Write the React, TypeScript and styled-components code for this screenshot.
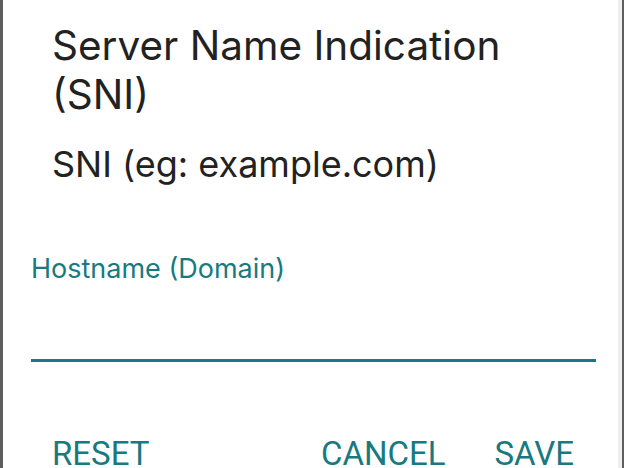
import React from "react";
import styled, { createGlobalStyle } from "styled-components";

const Global = createGlobalStyle`
  html, body { margin: 0; padding: 0; background: #5e5e5e; }
  body { font-family: Inter, Roboto, sans-serif; }
  #root { width: 624px; height: 468px; overflow: hidden; }
`;

const Overlay = styled.div`
  width: 624px;
  height: 468px;
  display: flex;
  padding-left: 3px;
  padding-right: 2px;
  box-sizing: border-box;
`;

const Dialog = styled.div`
  flex: 1;
  background: #ffffff;
  border-right: 4px solid #efefef;
  display: flex;
  flex-direction: column;
  overflow: hidden;
`;

const Title = styled.h1`
  margin: 0;
  padding: 21px 40px 0 49px;
  font-family: Inter, sans-serif;
  font-weight: 400;
  font-size: 40.5px;
  line-height: 49px;
  color: #222222;
`;

const Message = styled.p`
  margin: 0;
  padding: 23px 40px 0 49px;
  font-family: Inter, sans-serif;
  font-weight: 400;
  font-size: 36px;
  line-height: 44px;
  color: #222222;
`;

const Field = styled.div`
  margin: 67px 22px 0 28px;
  display: flex;
  flex-direction: column;
`;

const Label = styled.label`
  font-family: Inter, sans-serif;
  font-size: 27px;
  line-height: 32px;
  color: #187a80;
`;

const Input = styled.input`
  border: none;
  border-bottom: 3px solid #187a80;
  outline: none;
  height: 74px;
  padding: 0;
  font-size: 28px;
  background: transparent;
`;

const Actions = styled.div`
  margin-top: 72px;
  display: flex;
  align-items: flex-start;
  padding: 0 44px 0 49px;
`;

const Spacer = styled.div`
  flex: 1;
`;

const Button = styled.button<{ $gap?: number }>`
  border: none;
  background: none;
  padding: 0;
  margin-left: ${(p) => p.$gap ?? 0}px;
  font-family: Roboto, sans-serif;
  font-size: 33px;
  line-height: normal;
  color: #187a80;
  text-transform: uppercase;
  cursor: pointer;
`;

export default function App() {
  return (
    <>
      <Global />
      <Overlay>
        <Dialog>
          <Title>Server Name Indication (SNI)</Title>
          <Message>SNI (eg: example.com)</Message>
          <Field>
            <Label>Hostname (Domain)</Label>
            <Input />
          </Field>
          <Actions>
            <Button>Reset</Button>
            <Spacer />
            <Button>Cancel</Button>
            <Button $gap={49}>Save</Button>
          </Actions>
        </Dialog>
      </Overlay>
    </>
  );
}
